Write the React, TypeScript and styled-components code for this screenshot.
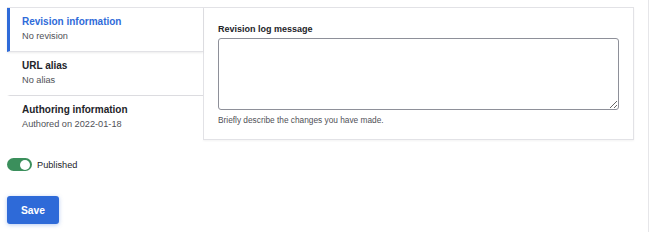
import React, { useState } from "react";
import styled, { createGlobalStyle } from "styled-components";

const Global = createGlobalStyle`
  html, body { margin: 0; padding: 0; background: #fff; }
  body { font-family: "Liberation Sans", Arial, sans-serif; color: #232429; }
  * { box-sizing: border-box; }
`;

const Page = styled.div`
  width: 649px;
  height: 232px;
  border-right: 1px solid #e6e6e9;
  padding: 7px 0 0 7px;
  overflow: hidden;
`;

const Layout = styled.div`
  display: flex;
  align-items: flex-start;
`;

const TabList = styled.div`
  width: 196px;
  flex: none;
  border-top: 1px solid #e4e4e8;
`;

const Tab = styled.div<{ $active?: boolean }>`
  position: relative;
  padding: 7px 10px 9px 12px;
  border-left: 3px solid ${(p) => (p.$active ? "#2f6bd9" : "transparent")};
  border-bottom: 1px solid ${(p) => (p.$active ? "#e2e2e6" : "#dcdce0")};
  background: #fff;
  box-shadow: ${(p) => (p.$active ? "0 1px 2px rgba(0,0,0,0.08)" : "none")};
  z-index: ${(p) => (p.$active ? 1 : 0)};
  &:last-child { border-bottom-color: transparent; }
`;

const TabTitle = styled.div<{ $active?: boolean }>`
  font-size: 10px;
  line-height: 13px;
  font-weight: 700;
  color: ${(p) => (p.$active ? "#2f6bd9" : "#232429")};
`;

const TabSummary = styled.div`
  margin-top: 2px;
  font-size: 9.2px;
  line-height: 12px;
  color: #505157;
`;

const Panel = styled.div`
  width: 431px;
  flex: none;
  border: 1px solid #e2e2e6;
  box-shadow: 0 1px 2px rgba(0, 0, 0, 0.05);
  padding: 15px 14px 13px 14px;
  background: #fff;
`;

const Label = styled.label`
  display: block;
  font-size: 9px;
  line-height: 12px;
  font-weight: 700;
  color: #232429;
  margin-bottom: 3px;
`;

const TextArea = styled.textarea`
  display: block;
  width: 401px;
  height: 72px;
  border: 1px solid #8e9099;
  border-radius: 3px;
  resize: vertical;
  margin: 0;
  font-family: inherit;
`;

const Description = styled.div`
  margin-top: 5px;
  font-size: 8.3px;
  line-height: 11px;
  color: #505157;
`;

const ToggleRow = styled.label`
  display: flex;
  align-items: center;
  gap: 5px;
  margin-top: 18px;
  height: 13px;
`;

const Track = styled.span<{ $on: boolean }>`
  position: relative;
  width: 25px;
  height: 13px;
  border-radius: 7px;
  background: ${(p) => (p.$on ? "#3b8f5c" : "#9a9ca3")};
  flex: none;
`;

const Knob = styled.span<{ $on: boolean }>`
  position: absolute;
  top: 1.5px;
  left: ${(p) => (p.$on ? "13px" : "2px")};
  width: 10px;
  height: 10px;
  border-radius: 50%;
  background: #fff;
`;

const ToggleText = styled.span`
  font-size: 9.2px;
  line-height: 12px;
  color: #232429;
`;

const SaveButton = styled.button`
  display: block;
  margin-top: 25px;
  width: 52px;
  height: 28px;
  border: none;
  border-radius: 3px;
  background: #2e6ad8;
  color: #fff;
  font-family: inherit;
  font-size: 10.3px;
  font-weight: 700;
  box-shadow: 0 1px 4px rgba(46, 106, 216, 0.35);
  padding: 0;
`;

const tabs = [
  { title: "Revision information", summary: "No revision", active: true },
  { title: "URL alias", summary: "No alias" },
  { title: "Authoring information", summary: "Authored on 2022-01-18" },
];

export default function App() {
  const [on, setOn] = useState(true);
  return (
    <>
      <Global />
      <Page>
        <Layout>
          <TabList>
            {tabs.map((t) => (
              <Tab key={t.title} $active={t.active}>
                <TabTitle $active={t.active}>{t.title}</TabTitle>
                <TabSummary>{t.summary}</TabSummary>
              </Tab>
            ))}
          </TabList>
          <Panel>
            <Label htmlFor="rev">Revision log message</Label>
            <TextArea id="rev" />
            <Description>Briefly describe the changes you have made.</Description>
          </Panel>
        </Layout>
        <ToggleRow onClick={() => setOn(!on)}>
          <Track $on={on}>
            <Knob $on={on} />
          </Track>
          <ToggleText>Published</ToggleText>
        </ToggleRow>
        <SaveButton>Save</SaveButton>
      </Page>
    </>
  );
}
